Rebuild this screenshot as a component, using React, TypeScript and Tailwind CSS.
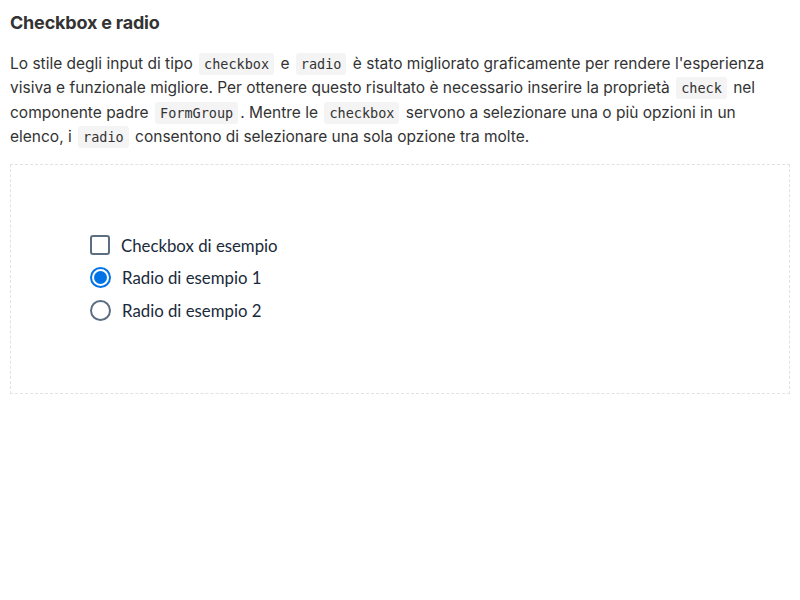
import React, { useState } from "react";

const Code: React.FC<{ children: React.ReactNode }> = ({ children }) => (
  <code className="mx-[2px] rounded-[3px] bg-[#f4f4f4] px-[5px] py-[3px] font-['DejaVu_Sans_Mono',monospace] text-[13.5px] leading-none text-[#333]">
    {children}
  </code>
);

export default function App() {
  const [checked, setChecked] = useState(false);
  const [radio, setRadio] = useState("1");

  return (
    <div className="min-h-[600px] bg-white px-[10px] pt-[12px] font-['Inter',sans-serif] text-[#333]">
      <h2 className="text-[18px] font-bold leading-[22px] tracking-[-0.2px] text-[#333]">Checkbox e radio</h2>
      <p className="mt-[18px] text-[15.5px] leading-[24.4px]">
        Lo stile degli input di tipo <Code>checkbox</Code> e <Code>radio</Code> è stato migliorato graficamente per
        rendere l'esperienza visiva e funzionale migliore. Per ottenere questo risultato è necessario inserire la
        proprietà <Code>check</Code> nel componente padre <Code>FormGroup</Code>. Mentre le <Code>checkbox</Code>{" "}
        servono a selezionare una o più opzioni in un elenco, i <Code>radio</Code> consentono di selezionare una sola
        opzione tra molte.
      </p>

      <div className="mt-[14px] h-[230px] border border-dashed border-[#e2e2e2] px-[79px] pt-[70px]">
        <div className="flex flex-col gap-[11.5px] font-['Lato',sans-serif] text-[16.8px] text-[#1a2a3a]">
          <label className="flex h-[21px] cursor-pointer items-center gap-[11px]" onClick={() => setChecked(!checked)}>
            <span
              className={`flex h-[20px] w-[20px] items-center justify-center rounded-[3px] border-2 ${
                checked ? "border-[#0066cc] bg-[#0066cc]" : "border-[#5c6f82] bg-white"
              }`}
            >
              {checked && (
                <svg viewBox="0 0 16 16" className="h-[14px] w-[14px]">
                  <path d="M3 8.5l3 3 7-7" fill="none" stroke="#fff" strokeWidth="2" />
                </svg>
              )}
            </span>
            Checkbox di esempio
          </label>
          {["1", "2"].map((n) => (
            <label key={n} className="flex h-[21px] cursor-pointer items-center gap-[11px]" onClick={() => setRadio(n)}>
              <span
                className={`flex h-[21px] w-[21px] items-center justify-center rounded-full border-2 ${
                  radio === n ? "border-[#0073e6]" : "border-[#5c6f82]"
                }`}
              >
                {radio === n && <span className="h-[13px] w-[13px] rounded-full bg-[#0073e6]" />}
              </span>
              Radio di esempio {n}
            </label>
          ))}
        </div>
      </div>
    </div>
  );
}
